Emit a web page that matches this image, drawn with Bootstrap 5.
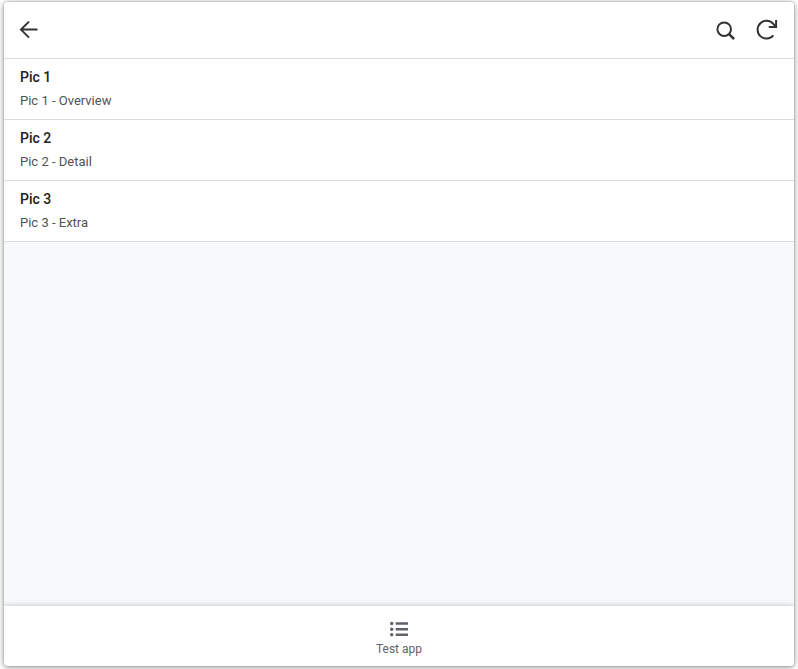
<!DOCTYPE html>
<html lang="en">
<head>
<meta charset="utf-8">
<meta name="viewport" content="width=device-width, initial-scale=1">
<title>Test app</title>
<link href="https://cdn.jsdelivr.net/npm/bootstrap@5.3.0/dist/css/bootstrap.min.css" rel="stylesheet">
<style>
body{font-family:Roboto,sans-serif;background:#fff;padding:2px 4px 3px;height:100vh;overflow:hidden}
.app-frame{--bs-border-color:#dadce0;border-radius:4px;background:#f8f9fb;box-shadow:0 0 0 1px rgba(0,0,0,.08),0 1px 6px rgba(0,0,0,.45)}
.app-bar{height:57px;padding:0 16px 1px 14px}
.tool{line-height:0;color:#333}
.tool svg,.tab-link svg{display:block}
.pic-item{height:61px;padding:8px 16px 0}
.pic-title{font-size:14px;font-weight:500;line-height:20px;color:#202124}
.pic-sub{font-size:13px;line-height:18px;margin-top:5px;color:#505257}
.tab-bar{height:60px;box-shadow:0 0 6px rgba(0,0,0,.24);padding-top:15px}
.tab-link{font-size:12px;line-height:16px;color:#5f6368}
</style>
</head>
<body>
<div class="app-frame d-flex flex-column h-100 overflow-hidden">
  <header class="app-bar bg-white border-bottom d-flex align-items-center justify-content-between flex-shrink-0">
    <button class="tool btn p-0 border-0" aria-label="Back">
      <svg width="22" height="22" viewBox="0 0 22 22" fill="none" stroke="currentColor" stroke-width="2"><path d="M19.5 10.6H3.5M11 2.6l-8 8 8 8"/></svg>
    </button>
    <div class="d-flex align-items-center">
      <button class="tool btn p-0 border-0 me-3" aria-label="Search">
        <svg width="26" height="24" viewBox="0 0 26 24" fill="none" stroke="currentColor" stroke-width="2"><circle cx="12.2" cy="11.2" r="6.8"/><path d="M17.1 16.2l5 5" stroke-width="2.6"/></svg>
      </button>
      <button class="tool btn p-0 border-0" aria-label="Refresh">
        <svg width="24" height="24" viewBox="0 0 24 24" fill="none" stroke="currentColor" stroke-width="2"><path d="M19.3 17.4A8.9 8.9 0 1 1 19.3 5.9L22 8.9M22.1 1.9V8.9H14.8"/></svg>
      </button>
    </div>
  </header>
  <main class="flex-grow-1">
    <div class="list-group list-group-flush rounded-0">
      <div class="list-group-item pic-item border-0 border-bottom"><div class="pic-title">Pic 1</div><div class="pic-sub">Pic 1 - Overview</div></div>
      <div class="list-group-item pic-item border-0 border-bottom"><div class="pic-title">Pic 2</div><div class="pic-sub">Pic 2 - Detail</div></div>
      <div class="list-group-item pic-item border-0 border-bottom"><div class="pic-title">Pic 3</div><div class="pic-sub">Pic 3 - Extra</div></div>
    </div>
  </main>
  <nav class="tab-bar bg-white d-flex justify-content-center flex-shrink-0">
    <a class="tab-link d-flex flex-column align-items-center text-decoration-none" href="#">
      <svg class="mb-1" width="18" height="16" viewBox="0 0 18 16" fill="currentColor"><circle cx="1.7" cy="2.5" r="1.7"/><circle cx="1.7" cy="8.2" r="1.7"/><circle cx="1.7" cy="13.8" r="1.7"/><path d="M5.7 1.2H18v2.6H5.7zM5.7 6.9H18v2.6H5.7zM5.7 12.5H18v2.6H5.7z"/></svg>
      Test app
    </a>
  </nav>
</div>
<script src="https://cdn.jsdelivr.net/npm/bootstrap@5.3.0/dist/js/bootstrap.bundle.min.js"></script>
</body>
</html>
